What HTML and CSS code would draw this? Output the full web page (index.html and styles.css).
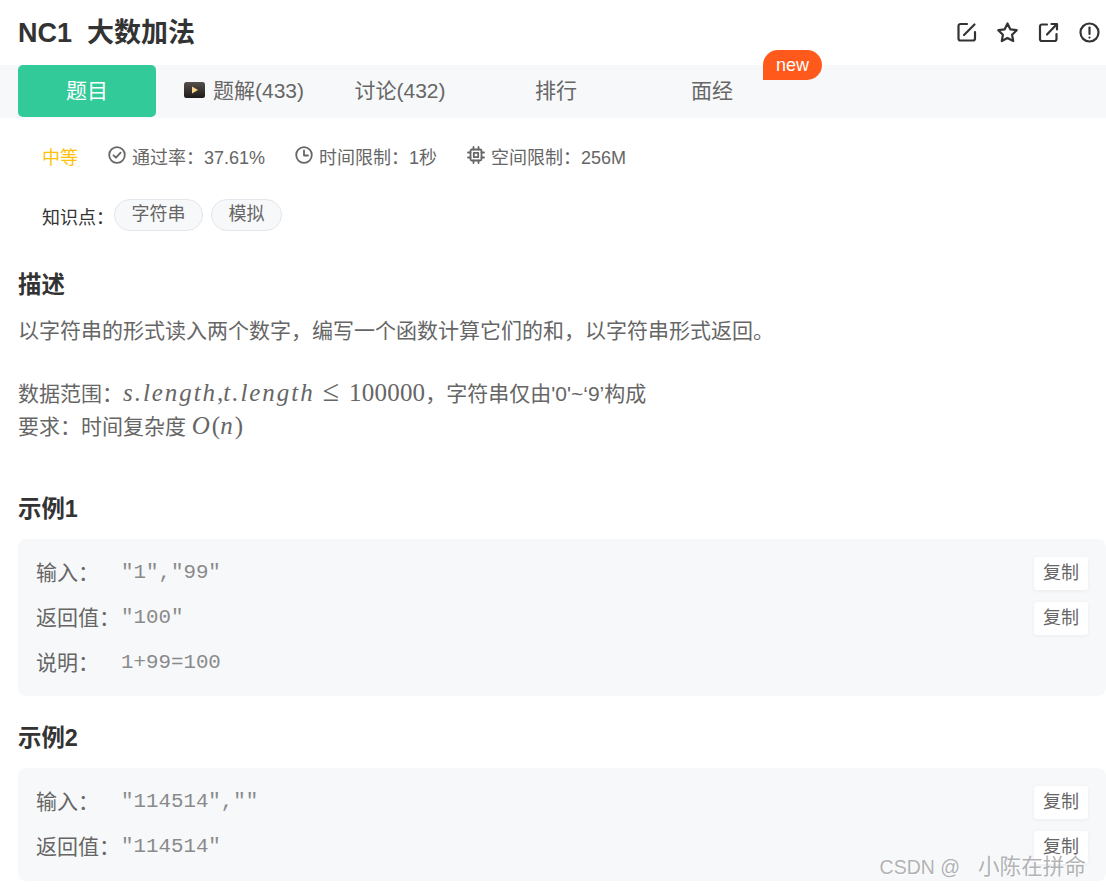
FILE: index.html
```html
<!DOCTYPE html>
<html lang="zh-CN">
<head>
    <meta charset="UTF-8">
    <meta name="viewport" content="width=device-width, initial-scale=1.0">
    <title>NC1 大数加法</title>
    <link rel="stylesheet" href="styles.css">
</head>
<body>
    <header class="title-bar">
        <h1 class="title">NC1&nbsp; 大数加法</h1>
        <div class="actions">
            <svg class="action" viewBox="0 0 21 21"><path d="M11 2H4.500a2 2 0 0 0-2 2v12.500a2 2 0 0 0 2 2H17a2 2 0 0 0 2-2V10"/><path d="M8 13 18.500 2.500"/></svg>
            <svg class="action" viewBox="0 0 21 21"><path d="M10.500 1.500l2.800 5.800 6.400.9-4.600 4.500 1.100 6.300-5.700-3-5.700 3 1.100-6.300-4.600-4.500 6.400-.9z"/></svg>
            <svg class="action" viewBox="0 0 21 21"><path d="M9 2.500H4a2 2 0 0 0-2 2V17a2 2 0 0 0 2 2h12.500a2 2 0 0 0 2-2v-5"/><path d="M9 12.500 18.500 2.500"/><path d="M13.500 2H19v5.500"/></svg>
            <svg class="action" viewBox="0 0 21 21"><circle cx="10.500" cy="10.500" r="9"/><path d="M10.500 5.500v6.500"/><path d="M10.500 15.500v.1"/></svg>
        </div>
    </header>

    <nav class="tabs">
        <a class="tab active">题目</a>
        <a class="tab">
            <svg class="video-icon" viewBox="0 0 21 16"><defs><linearGradient id="vid" x1="0" y1="0" x2="0" y2="1"><stop offset="0" stop-color="#57504b"/><stop offset="1" stop-color="#1d1a19"/></linearGradient></defs><rect width="21" height="16" rx="2.500" fill="url(#vid)"/><path d="M8 4.500 14 8l-6 3.500z" fill="#fbd58a"/></svg>
            题解(433)
        </a>
        <a class="tab">讨论(432)</a>
        <a class="tab">排行</a>
        <a class="tab">面经</a>
        <span class="badge-new">new</span>
    </nav>

    <div class="meta">
        <span class="level">中等</span>
        <span class="meta-item">
            <svg class="meta-icon" viewBox="0 0 18 18"><circle cx="9" cy="9" r="7.800"/><path d="M5.500 9.300 8 11.700l4.600-5"/></svg>
            通过率：37.61%
        </span>
        <span class="meta-item">
            <svg class="meta-icon" viewBox="0 0 18 18"><circle cx="9" cy="9" r="7.800"/><path d="M9 4.500V9.500h4"/></svg>
            时间限制：1秒
        </span>
        <span class="meta-item">
            <svg class="meta-icon" viewBox="0 0 18 18"><rect x="3.500" y="3.500" width="11" height="11" rx="1.500"/><rect x="6.800" y="6.800" width="4.400" height="4.400"/><path d="M6.500 1v2.500M11.500 1v2.500M6.500 14.500V17M11.500 14.500V17M1 6.500h2.500M1 11.500h2.500M14.500 6.500H17M14.500 11.500H17"/></svg>
            空间限制：256M
        </span>
    </div>

    <div class="topics">
        <span class="topics-label">知识点：</span>
        <a class="chip">字符串</a>
        <a class="chip">模拟</a>
    </div>

    <main class="content">
        <h2 class="section-title first">描述</h2>
        <p class="desc">以字符串的形式读入两个数字，编写一个函数计算它们的和，以字符串形式返回。</p>
        <p class="desc spaced">数据范围：<span class="math"><i>s.length</i>,<i>t.length</i><span class="leq">≤</span><span class="digits">100000</span></span>，字符串仅由'0'~‘9’构成</p>
        <p class="desc">要求：时间复杂度 <span class="math"><i>O</i>(<i>n</i>)</span></p>

        <h2 class="section-title example-one">示例1</h2>
        <div class="sample">
            <div class="sample-row"><span class="sample-label">输入：</span><code>"1","99"</code><button class="copy">复制</button></div>
            <div class="sample-row"><span class="sample-label">返回值：</span><code>"100"</code><button class="copy">复制</button></div>
            <div class="sample-row note"><span class="sample-label">说明：</span><code>1+99=100</code></div>
        </div>

        <h2 class="section-title">示例2</h2>
        <div class="sample">
            <div class="sample-row"><span class="sample-label">输入：</span><code>"114514",""</code><button class="copy">复制</button></div>
            <div class="sample-row"><span class="sample-label">返回值：</span><code>"114514"</code><button class="copy">复制</button></div>
        </div>
    </main>

    <div class="watermark"><span class="watermark-id">CSDN @</span>小陈在拼命</div>
</body>
</html>
```

FILE: styles.css
```css
* {
    box-sizing: border-box;
}
body {
    margin: 0;
    font-family: "Liberation Sans", "Noto Sans CJK SC", sans-serif;
    color: #666;
    background: #fff;
}
.title-bar {
    display: flex;
    justify-content: space-between;
    align-items: center;
    height: 65px;
    padding: 0 6px 0 18px;
}
.title {
    margin: 0;
    font-size: 27px;
    line-height: 34px;
    color: #333;
}
.actions {
    display: flex;
    gap: 20px;
}
.action {
    width: 21px;
    height: 21px;
    fill: none;
    stroke: #333;
    stroke-width: 2.200;
    stroke-linecap: round;
    stroke-linejoin: round;
}
.tabs {
    position: relative;
    display: flex;
    height: 53px;
    padding-left: 18px;
    background: #f7f8fa;
}
.tab {
    display: flex;
    justify-content: center;
    align-items: center;
    gap: 8px;
    width: 156px;
    height: 52px;
    padding-bottom: 5px;
    font-size: 21px;
}
.tab.active {
    width: 138px;
    margin-right: 10px;
    border-radius: 5px;
    background: #32ca99;
    color: #fff;
}
.video-icon {
    width: 21px;
    height: 16px;
    margin-top: 2px;
}
.badge-new {
    position: absolute;
    left: 763px;
    top: -15px;
    width: 59px;
    height: 30px;
    border-radius: 15px 15px 15px 0;
    background: #ff5a1c;
    color: #fff;
    font-size: 18px;
    line-height: 30px;
    text-align: center;
}
.meta {
    display: flex;
    align-items: center;
    gap: 30px;
    height: 34px;
    margin-top: 21px;
    padding-left: 42px;
    font-size: 18px;
}
.level {
    color: #ffc107;
}
.meta-item {
    display: flex;
    align-items: center;
    gap: 6px;
}
.meta-icon {
    width: 18px;
    height: 18px;
    margin-top: -2px;
    fill: none;
    stroke: #666;
    stroke-width: 1.800;
    stroke-linecap: round;
    stroke-linejoin: round;
}
.topics {
    display: flex;
    align-items: center;
    gap: 8px;
    margin-top: 26px;
    padding-left: 42px;
    font-size: 18px;
}
.topics-label {
    margin-right: -8px;
    padding-top: 2px;
    color: #333;
}
.chip {
    height: 32px;
    padding: 0 16.500px;
    border: 1px solid #e4e6eb;
    border-radius: 16px;
    background: #f7f8fa;
    line-height: 29px;
}
.content {
    padding-left: 18px;
}
.section-title {
    margin: 0;
    font-size: 23.400px;
    line-height: 32px;
    color: #333;
}
.section-title.first {
    margin-top: 38px;
}
.section-title.example-one {
    margin-top: 50px;
}
.desc {
    margin: 0;
    font-size: 21px;
    line-height: 33px;
}
.section-title + .desc {
    margin-top: 13px;
}
.desc.spaced {
    margin-top: 29px;
}
.math {
    font-family: "Liberation Serif", serif;
    font-size: 25px;
    line-height: 1;
}
.math i {
    letter-spacing: 1.950px;
}
.leq {
    margin: 0 10px 0 8px;
    font-size: 30px;
    line-height: 1;
}
.digits {
    letter-spacing: 0.200px;
}
.sample {
    display: flex;
    flex-direction: column;
    gap: 12px;
    margin: 14px 0 26px;
    padding: 18px 18px 17px;
    border-radius: 8px;
    background: #f7f8fa;
}
.sample-row {
    display: flex;
    align-items: center;
    height: 33px;
    font-size: 21px;
}
.sample-row.note {
    height: 32px;
}
.sample-label {
    width: 85px;
    padding-bottom: 5px;
}
.sample-row code {
    padding-bottom: 2px;
    font-family: "Liberation Mono", monospace;
    font-size: 20.800px;
    color: #8a8a8a;
}
.copy {
    width: 54px;
    height: 33px;
    margin-left: auto;
    padding: 0 0 6px;
    border: 0;
    border-radius: 3px;
    background: #fff;
    box-shadow: 0 1px 4px rgba(0, 0, 0, 0.05);
    color: #666;
    font-family: inherit;
    font-size: 18px;
}
.watermark {
    position: absolute;
    right: 20px;
    top: 853px;
    font-size: 21.600px;
    line-height: 28px;
    color: rgba(130, 130, 130, 0.6);
    text-shadow: 1px 1px 1px rgba(255, 255, 255, 0.6);
}
.watermark-id {
    margin-right: 18px;
    font-size: 19.500px;
}
```
